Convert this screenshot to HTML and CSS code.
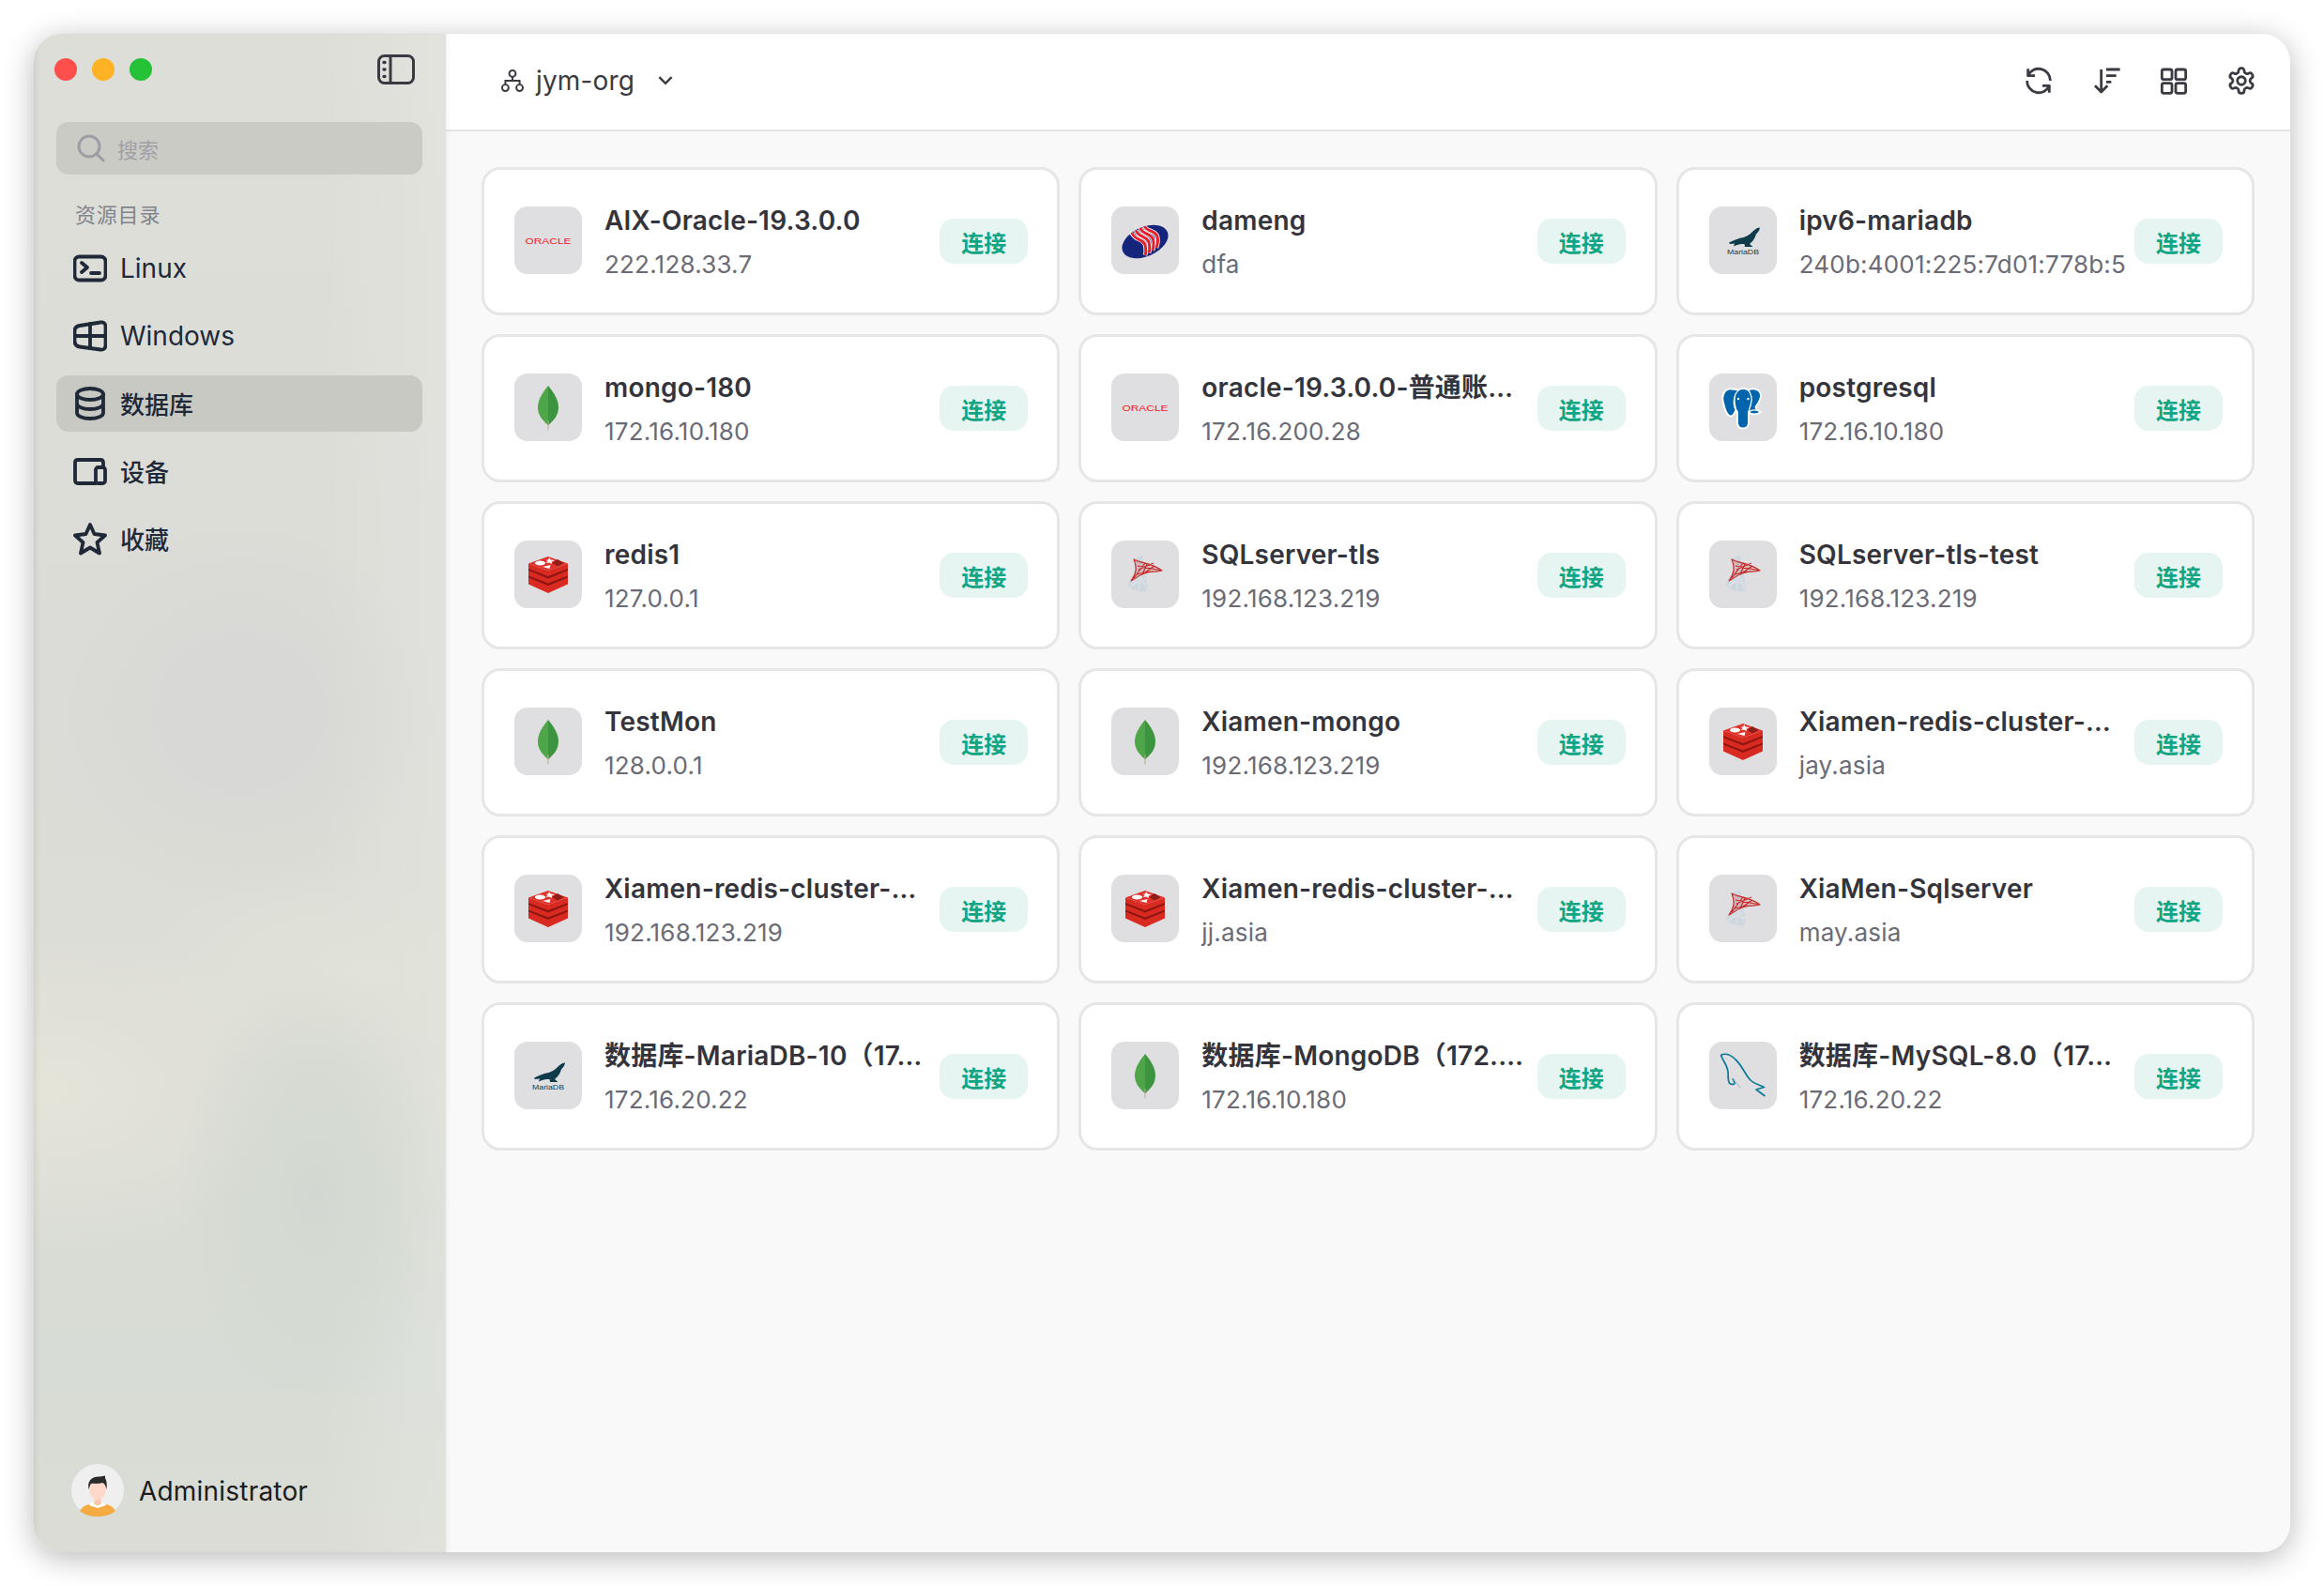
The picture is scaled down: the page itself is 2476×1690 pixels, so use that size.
FILE: index.html
```html
<!DOCTYPE html>
<html lang="zh-CN">
<head>
<meta charset="utf-8">
<title>jym-org</title>
<link rel="stylesheet" href="styles.css">
</head>
<body>
<svg class="defs" aria-hidden="true">
  <symbol id="oracle" viewBox="0 0 72 72"><text x="11.5" y="39.5" class="oracle-text" textLength="49" lengthAdjust="spacingAndGlyphs">ORACLE</text></symbol>
  <symbol id="mongo" viewBox="0 0 72 72">
    <path d="M36 13C42 20 47 28 47 36C47 45 41 51 36 55Z" fill="#3d943e"/>
    <path d="M36 13C30 20 25 28 25 36C25 45 31 51 36 55Z" fill="#4fa648"/>
    <path d="M35.4 50H36.6L36.4 60.5H35.6Z" fill="#b3a588"/>
  </symbol>
  <symbol id="redis" viewBox="0 0 72 72">
    <path d="M15 24.500L36 32L57 24.500V46.500L36 56L15 46.500Z" fill="#d92a22"/>
    <path d="M15 30L36 38L57 30V32L36 40.500L15 32Z" fill="#8f1510"/>
    <path d="M15 37.500L36 45.500L57 37.500V39.500L36 48L15 39.500Z" fill="#8f1510"/>
    <path d="M36 17L57 24.500L36 32L15 24.500Z" fill="#e0312a"/>
    <ellipse cx="27.500" cy="24" rx="5.500" ry="2.500" fill="#fff"/>
    <path d="M37 18L38.800 20.500L43 21L39.600 22.800L40 25L37 23.600L33.600 24L35.600 22L33.500 20.800L36.200 20.500Z" fill="#fff"/>
    <path d="M38.500 26L37.600 30L30 28Z" fill="#fff"/>
    <path d="M46 20L52.500 24L46 27.500L40.500 24Z" fill="#8f1d18"/>
  </symbol>
  <symbol id="dameng" viewBox="0 0 72 72">
    <ellipse cx="36" cy="37.500" rx="26" ry="15.500" transform="rotate(-24 36 37.500)" fill="#16257c"/>
    <g class="dm-base">
      <path d="M22 28C24 36 34 34 36 41C37 45 37 49 36 52"/>
      <path d="M26.500 25.500C28 33 38 31 40 38C41 42 41 46 40 49.500"/>
      <path d="M31 23C32.500 30 42.500 28 44.500 35C45.500 39 45 43 44 47"/>
      <path d="M35.500 21C37 27 47 25 49 32C50 36 49.500 40 48 44"/>
    </g>
    <g class="dm-stripes">
      <path d="M22 28C24 36 34 34 36 41C37 45 37 49 36 52"/>
      <path d="M26.500 25.500C28 33 38 31 40 38C41 42 41 46 40 49.500"/>
      <path d="M31 23C32.500 30 42.500 28 44.500 35C45.500 39 45 43 44 47"/>
      <path d="M35.500 21C37 27 47 25 49 32C50 36 49.500 40 48 44"/>
    </g>
  </symbol>
  <symbol id="mariadb" viewBox="0 0 72 72">
    <path d="M54 22.500C51 22 48 25 45.500 27.500C41 32 37 33 32 34C28 35 25 37 21 38.500L22 40L27 39.500L26 42.500C30 40.500 33 40 37.500 40L38 43H46.500L43 40C47 37 49 33 50 29.500C52 27.500 53.500 26 54 22.500Z" fill="#0f3b4a"/>
    <text x="19" y="50.500" class="maria-text" textLength="34" lengthAdjust="spacingAndGlyphs">MariaDB</text>
  </symbol>
  <symbol id="postgres" viewBox="0 0 72 72">
    <path d="M24 16.500C16 15.500 13 24 15 31C16.500 38 19 46 23.500 45.500C26.500 45 27.500 41 28.500 38.500L30 41V52C30 57 33 58.500 36 58.500C39.500 58.500 42 56 42 52V41C45 44.500 51 44 55 41C52 39.500 49.500 38.500 49.500 35.500C53 31 56 25 54.500 21C52.500 16 46 15.500 41.500 17.500C38.500 16 34 16 31 17.500C29 17 26.500 16.500 24 16.500Z" fill="#0065ac" stroke="#fff" stroke-width="1.800" stroke-linejoin="round"/>
    <path d="M28.500 38.500C27 33 26 27 28 22C29.500 19.500 31 18.500 31 17.500M42 41C43 36 46 31 45 25C44 21 43 19 41.500 17.500M28.500 38.500C26 36 26 30 27 25M42 41C46 38 50 38 55 41" fill="none" stroke="#fff" stroke-width="1.300"/>
    <circle cx="31" cy="27" r="1.200" fill="#fff"/><circle cx="41.500" cy="27" r="1.200" fill="#fff"/>
  </symbol>
  <symbol id="sqlserver" viewBox="0 0 72 72">
    <path d="M24 19L33 16C35 28 38 40 39 53C33 56 24 54 17.500 49L18 43L26 36Z" fill="#cdd7dd"/>
    <path d="M18 43L39 46M20 51L36 33M29 54L33 25M24 19L38 53M18 49L37 40" fill="none" stroke="#dfe4e8" stroke-width="1"/>
    <path d="M24 20C30 24 44 24 54 32C47 34 39 32 33 36C28 38 25 41 21 43C26 36 28 30 24 20Z" fill="#cf3f3f" fill-opacity=".22"/>
    <path d="M24 20C30 24 44 24 54 32C47 34 39 32 33 36C28 38 25 41 21 43C26 36 28 30 24 20Z M28 27L54 32M29 31L45 24M33 36L38 25M27 36L41 33M24 40L36 24M33 36L46 27" fill="none" stroke="#c42b2b" stroke-width="1.200" stroke-linejoin="round"/>
  </symbol>
  <symbol id="mysql" viewBox="0 0 72 72">
    <path d="M12.500 14C18 12 24 15 28 19C35 25 38 35 44 41C48 45 54 46 58.500 48.500L50 51L59.500 58" fill="none" stroke="#0b7a96" stroke-width="1.700" stroke-linejoin="round"/>
    <path d="M12.500 14C14 20 19 24 20 32C20.500 37 19.500 41 21.500 44C23 46 27 46 27 44C27 42 25.500 41 25 39" fill="none" stroke="#0b7a96" stroke-width="1.700"/>
    <path d="M25 39C27 42 30 46 33.500 49" fill="none" stroke="#8fb0bc" stroke-width="1"/>
  </symbol>
</svg>

<div class="window">
  <aside class="sidebar">
    <div class="side-top">
      <div class="lights">
        <span class="light light-red"></span>
        <span class="light light-yellow"></span>
        <span class="light light-green"></span>
      </div>
      <svg class="toggle-icon" viewBox="0 0 40 32"><rect x="1.500" y="1.500" width="37" height="29" rx="6"/><path d="M14 2V30"/><path class="dots" d="M7 8.500H8M7 16H8M7 23.500H8"/></svg>
    </div>
    <div class="search">
      <svg class="search-icon" viewBox="0 0 30 30"><circle cx="13" cy="13" r="11"/><path d="M21 21L28 28"/></svg>
      <span>搜索</span>
    </div>
    <div class="section-title">资源目录</div>
    <nav class="menu">
      <a class="menu-item"><svg class="menu-icon" viewBox="0 0 36 36"><rect x="1.500" y="5.500" width="33" height="25" rx="5"/><path d="M9 12L15 17L9 22"/><path d="M19 23H28"/></svg><span>Linux</span></a>
      <a class="menu-item"><svg class="menu-icon" viewBox="0 0 36 36"><path d="M1.500 13C1.500 9 3.500 7.500 7 7L29 3.500C32.500 3 34.500 5 34.500 8V28C34.500 31 32.500 33 29 32.500L7 29.500C3.500 29 1.500 27 1.500 23Z"/><path d="M1.500 18H34.500M18 5V31"/></svg><span>Windows</span></a>
      <a class="menu-item active"><svg class="menu-icon" viewBox="0 0 36 36"><ellipse cx="18" cy="8" rx="14" ry="6"/><path d="M4 8V28C4 31.500 10 34 18 34S32 31.500 32 28V8M4 18C4 21.500 10 24 18 24S32 21.500 32 18"/></svg><span class="cjk">数据库</span></a>
      <a class="menu-item"><svg class="menu-icon" viewBox="0 0 36 36"><path d="M24 31H5C3 31 2 30 2 28V9C2 7 3 6 5 6H29C31 6 32 7 32 9V13"/><rect x="24" y="14" width="10" height="17" rx="2.500"/></svg><span class="cjk">设备</span></a>
      <a class="menu-item"><svg class="menu-icon" viewBox="0 0 36 36"><path d="M18 3L22.500 13L34 14.500L25.500 22L28 33.500L18 27.500L8 33.500L10.500 22L2 14.500L13.500 13Z"/></svg><span class="cjk">收藏</span></a>
    </nav>
    <div class="user">
      <svg class="avatar" viewBox="0 0 56 56">
        <circle cx="28" cy="28" r="28" fill="#efefef"/>
        <path d="M9 50C12 44 19 42 28 42S44 44 47 50C42 54 35 56 28 56S14 54 9 50Z" fill="#f3ab42"/>
        <path d="M21 41L28 44L35 41L37 44L28 47L19 44Z" fill="#fff"/>
        <rect x="24.500" y="33" width="7" height="10" rx="3" fill="#fbc9b2"/>
        <ellipse cx="28" cy="26" rx="9" ry="12" fill="#fed9c9"/>
        <path d="M18.500 27C16.500 17 23 13 30 13.500L36 12.500L36 15C38 18 38 23 37.500 27C36.500 23 35.500 20.500 33 20C28 21.500 24 20.500 21 21C19.500 22.500 19.500 25 18.500 27Z" fill="#2b2b2b"/>
      </svg>
      <span class="user-name">Administrator</span>
    </div>
  </aside>

  <main class="main">
    <header class="topbar">
      <div class="org">
        <svg class="org-icon" viewBox="0 0 24 24"><circle cx="12" cy="5" r="3.200"/><circle cx="5" cy="19" r="3.200"/><circle cx="19" cy="19" r="3.200"/><path d="M12 8.200V12M5 15.800V12H19V15.800"/></svg>
        <span class="org-name">jym-org</span>
        <svg class="chevron" viewBox="0 0 16 10"><path d="M2 2L8 8L14 2"/></svg>
      </div>
      <div class="tools">
        <svg class="tool" viewBox="0 0 24 24"><path d="M3.500 2.500V8H9"/><path d="M3.500 8A9.300 9.300 0 0 1 21.300 12"/><path d="M20.500 21.500V16H15"/><path d="M20.500 16A9.300 9.300 0 0 1 2.700 12"/></svg>
        <svg class="tool" viewBox="0 0 24 24"><path d="M8 3V21M3 16L8 21L13 16"/><path d="M12 3H23M12 8H20M12 13H16"/></svg>
        <svg class="tool" viewBox="0 0 24 24"><rect x="2.500" y="3" width="8" height="8" rx="1.500"/><rect x="13.500" y="3" width="8" height="8" rx="1.500"/><rect x="2.500" y="14" width="8" height="8" rx="1.500"/><rect x="13.500" y="14" width="8" height="8" rx="1.500"/></svg>
        <svg class="tool" viewBox="0 0 24 24"><path d="M12.220 2h-.44a2 2 0 0 0-2 2v.18a2 2 0 0 1-1 1.730l-.43.25a2 2 0 0 1-2 0l-.15-.08a2 2 0 0 0-2.730.73l-.22.38a2 2 0 0 0 .73 2.730l.15.1a2 2 0 0 1 1 1.720v.51a2 2 0 0 1-1 1.740l-.15.09a2 2 0 0 0-.73 2.730l.22.38a2 2 0 0 0 2.730.73l.15-.08a2 2 0 0 1 2 0l.43.25a2 2 0 0 1 1 1.730V20a2 2 0 0 0 2 2h.44a2 2 0 0 0 2-2v-.18a2 2 0 0 1 1-1.730l.43-.25a2 2 0 0 1 2 0l.15.08a2 2 0 0 0 2.730-.73l.22-.39a2 2 0 0 0-.73-2.730l-.15-.08a2 2 0 0 1-1-1.740v-.5a2 2 0 0 1 1-1.740l.15-.09a2 2 0 0 0 .73-2.730l-.22-.38a2 2 0 0 0-2.730-.73l-.15.08a2 2 0 0 1-2 0l-.43-.25a2 2 0 0 1-1-1.730V4a2 2 0 0 0-2-2z"/><circle cx="12" cy="12" r="3.200"/></svg>
      </div>
    </header>
    <section class="grid">
      <article class="card"><div class="logo"><svg><use href="#oracle"/></svg></div><div class="info"><div class="name">AIX-Oracle-19.3.0.0</div><div class="addr">222.128.33.7</div></div><button class="connect">连接</button></article>
      <article class="card"><div class="logo"><svg><use href="#dameng"/></svg></div><div class="info"><div class="name">dameng</div><div class="addr">dfa</div></div><button class="connect">连接</button></article>
      <article class="card"><div class="logo"><svg><use href="#mariadb"/></svg></div><div class="info"><div class="name">ipv6-mariadb</div><div class="addr">240b:4001:225:7d01:778b:5</div></div><button class="connect">连接</button></article>
      <article class="card"><div class="logo"><svg><use href="#mongo"/></svg></div><div class="info"><div class="name">mongo-180</div><div class="addr">172.16.10.180</div></div><button class="connect">连接</button></article>
      <article class="card"><div class="logo"><svg><use href="#oracle"/></svg></div><div class="info"><div class="name">oracle-19.3.0.0-普通账…</div><div class="addr">172.16.200.28</div></div><button class="connect">连接</button></article>
      <article class="card"><div class="logo"><svg><use href="#postgres"/></svg></div><div class="info"><div class="name">postgresql</div><div class="addr">172.16.10.180</div></div><button class="connect">连接</button></article>
      <article class="card"><div class="logo"><svg><use href="#redis"/></svg></div><div class="info"><div class="name">redis1</div><div class="addr">127.0.0.1</div></div><button class="connect">连接</button></article>
      <article class="card"><div class="logo"><svg><use href="#sqlserver"/></svg></div><div class="info"><div class="name">SQLserver-tls</div><div class="addr">192.168.123.219</div></div><button class="connect">连接</button></article>
      <article class="card"><div class="logo"><svg><use href="#sqlserver"/></svg></div><div class="info"><div class="name">SQLserver-tls-test</div><div class="addr">192.168.123.219</div></div><button class="connect">连接</button></article>
      <article class="card"><div class="logo"><svg><use href="#mongo"/></svg></div><div class="info"><div class="name">TestMon</div><div class="addr">128.0.0.1</div></div><button class="connect">连接</button></article>
      <article class="card"><div class="logo"><svg><use href="#mongo"/></svg></div><div class="info"><div class="name">Xiamen-mongo</div><div class="addr">192.168.123.219</div></div><button class="connect">连接</button></article>
      <article class="card"><div class="logo"><svg><use href="#redis"/></svg></div><div class="info"><div class="name">Xiamen-redis-cluster-…</div><div class="addr">jay.asia</div></div><button class="connect">连接</button></article>
      <article class="card"><div class="logo"><svg><use href="#redis"/></svg></div><div class="info"><div class="name">Xiamen-redis-cluster-…</div><div class="addr">192.168.123.219</div></div><button class="connect">连接</button></article>
      <article class="card"><div class="logo"><svg><use href="#redis"/></svg></div><div class="info"><div class="name">Xiamen-redis-cluster-…</div><div class="addr">jj.asia</div></div><button class="connect">连接</button></article>
      <article class="card"><div class="logo"><svg><use href="#sqlserver"/></svg></div><div class="info"><div class="name">XiaMen-Sqlserver</div><div class="addr">may.asia</div></div><button class="connect">连接</button></article>
      <article class="card"><div class="logo"><svg><use href="#mariadb"/></svg></div><div class="info"><div class="name">数据库-MariaDB-10（17…</div><div class="addr">172.16.20.22</div></div><button class="connect">连接</button></article>
      <article class="card"><div class="logo"><svg><use href="#mongo"/></svg></div><div class="info"><div class="name">数据库-MongoDB（172.…</div><div class="addr">172.16.10.180</div></div><button class="connect">连接</button></article>
      <article class="card"><div class="logo"><svg><use href="#mysql"/></svg></div><div class="info"><div class="name">数据库-MySQL-8.0（17…</div><div class="addr">172.16.20.22</div></div><button class="connect">连接</button></article>
    </section>
  </main>
</div>
</body>
</html>
```
FILE: styles.css
```css
* { box-sizing: border-box; }
html, body { margin: 0; height: 100%; }
body {
  background: #fff;
  padding: 36px;
  font-family: Inter, "Noto Sans CJK SC", sans-serif;
  overflow: hidden;
}
.defs { display: none; }

.window {
  display: flex;
  width: 2404px;
  height: 1618px;
  border-radius: 30px;
  overflow: hidden;
  background: #f9f9f9;
}
body::before {
  content: "";
  position: absolute;
  left: 36px;
  top: 36px;
  width: 2404px;
  height: 1618px;
  border-radius: 30px;
  box-shadow: 0 6px 32px rgba(0, 0, 0, .28);
}

/* Sidebar */
.sidebar {
  position: relative;
  z-index: 1;
  flex: 0 0 439px;
  display: flex;
  flex-direction: column;
  padding: 0 25px 38px 24px;
  background:
    radial-gradient(ellipse 150px 240px at 300px 1234px, #d2d8d1 0%, rgba(210, 216, 209, 0) 100%),
    radial-gradient(ellipse 280px 170px at 17px 1125px, #e5e4d9 0%, rgba(229, 228, 217, 0) 100%),
    radial-gradient(ellipse 210px 200px at 220px 724px, #d7d8d6 0%, rgba(215, 216, 214, 0) 100%),
    radial-gradient(ellipse 260px 120px at 350px 1000px, #e1e2d8 0%, rgba(225, 226, 216, 0) 100%),
    linear-gradient(90deg, rgba(0, 0, 0, 0) 70%, rgba(255, 255, 255, .16) 100%),
    linear-gradient(180deg, #dddeD8 0%, #dbdcd7 45%, #dcddd5 65%, #d8dcd6 88%, #dbddd5 100%);
  box-shadow: inset 5px 0 6px -4px rgba(0, 0, 0, .1), 2px 0 5px rgba(0, 0, 0, .05);
}
.side-top {
  flex: 0 0 74px;
  display: flex;
  align-items: center;
  justify-content: space-between;
  padding: 1px 8px 0 0;
}
.lights { display: flex; gap: 16px; margin-left: -2px; }
.light { width: 24px; height: 24px; border-radius: 50%; }
.light-red { background: #fe4f4c; }
.light-yellow { background: #feb224; }
.light-green { background: #25c137; }
.toggle-icon { width: 40px; height: 32px; fill: none; stroke: #3a3b42; stroke-width: 3; }
.toggle-icon .dots { stroke-linecap: round; stroke-width: 3.500; }

.search {
  margin-top: 20px;
  height: 56px;
  flex: none;
  border-radius: 13px;
  background: #cbcbc6;
  display: flex;
  align-items: center;
  gap: 13px;
  padding-left: 22px;
  font-size: 22px;
  color: #a0a0a6;
}
.search-icon { width: 30px; height: 30px; fill: none; stroke: #9d9da3; stroke-width: 3; stroke-linecap: round; }

.section-title {
  margin: 30px 0 14px 20px;
  font-size: 22px;
  line-height: 26px;
  color: #82848c;
  letter-spacing: .8px;
}
.menu { display: flex; flex-direction: column; gap: 12px; }
.menu-item {
  height: 60px;
  display: flex;
  align-items: center;
  gap: 14px;
  padding-left: 18px;
  border-radius: 13px;
  font-size: 28px;
  color: #1f2937;
}
.menu-item.active { background: #c9c9c4; }
.menu-item .cjk { font-size: 26px; font-weight: 500; margin-top: -2px; }
.menu-icon {
  width: 36px;
  height: 36px;
  fill: none;
  stroke: #1f2937;
  stroke-width: 3.800;
  stroke-linecap: round;
  stroke-linejoin: round;
}

.user {
  margin-top: auto;
  display: flex;
  align-items: center;
  gap: 16px;
  padding-left: 16px;
  font-size: 28px;
  color: #1c1c1e;
}
.user-name { margin-top: 2px; letter-spacing: .2px; }
.avatar { width: 56px; height: 56px; flex: none; }

/* Main */
.main {
  flex: 1;
  min-width: 0;
  display: flex;
  flex-direction: column;
}
.topbar {
  flex: 0 0 104px;
  background: #fff;
  border-bottom: 2px solid #e5e5e5;
  display: flex;
  align-items: center;
  justify-content: space-between;
  padding: 0 36px 3px 58px;
}
.org { display: flex; align-items: center; }
.org-icon { width: 26px; height: 26px; fill: none; stroke: #3a3b42; stroke-width: 1.800; }
.org-name { margin-left: 12px; font-size: 28px; letter-spacing: .15px; color: #3a3b42; }
.chevron { margin-left: 24px; width: 18px; height: 11px; fill: none; stroke: #3a3b42; stroke-width: 2.200; }
.tools { display: flex; gap: 40px; }
.tool {
  width: 32px;
  height: 32px;
  fill: none;
  stroke: #3a3b42;
  stroke-width: 2.100;
  stroke-linejoin: round;
}

.grid {
  flex: 1;
  display: grid;
  grid-template-columns: repeat(3, minmax(0, 1fr));
  grid-auto-rows: 158px;
  align-content: start;
  gap: 20px;
  padding: 38px;
}
.card {
  display: flex;
  align-items: center;
  background: #fff;
  border: 3px solid #e6e6e6;
  border-radius: 20px;
  padding: 0 31px 0 32px;
}
.logo {
  flex: 0 0 72px;
  width: 72px;
  height: 72px;
  border-radius: 14px;
  background: #dfdfe2;
  margin-top: -2px;
}
.logo svg { display: block; width: 72px; height: 72px; }
.info { flex: 1; min-width: 0; margin: 1px 6px 0 24px; }
.name {
  font-size: 28px;
  line-height: 38px;
  font-weight: 600;
  letter-spacing: .2px;
  color: #34343c;
  white-space: nowrap;
}
.addr {
  margin-top: 10px;
  font-size: 26px;
  line-height: 36px;
  letter-spacing: .2px;
  color: #6b6b76;
  white-space: nowrap;
}
.connect {
  flex: none;
  width: 94px;
  height: 48px;
  border: 0;
  border-radius: 15px;
  background: #e6f5f1;
  color: #12a584;
  font: 600 24px Inter, "Noto Sans CJK SC", sans-serif;
  padding: 0;
}

/* Logos */
.oracle-text { font: 400 9px "Liberation Sans", sans-serif; fill: #f01a22; }
.maria-text { font: 400 7px "Liberation Sans", sans-serif; fill: #0f3b4a; }
.dm-base { fill: none; stroke: #fff; stroke-width: 4.600; }
.dm-stripes { fill: none; stroke: #e3202b; stroke-width: 3; }
```
